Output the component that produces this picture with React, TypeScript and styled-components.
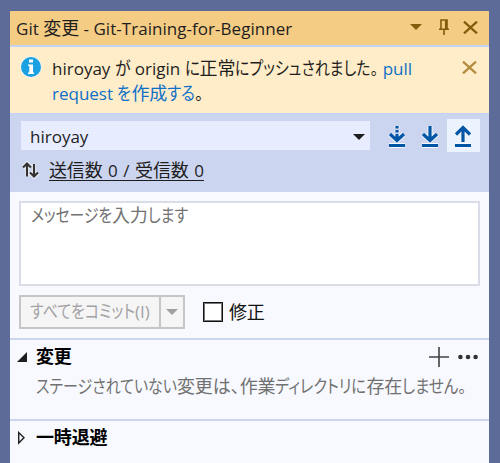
import React from "react";
import styled, { createGlobalStyle } from "styled-components";

const GlobalStyle = createGlobalStyle`
  * { box-sizing: border-box; }
  body { margin: 0; background: #5d6b99; }
`;

const Window = styled.main`
  width: 500px;
  height: 463px;
  padding: 11px 11px 0 10px;
  overflow: hidden;
  background: #5d6b99;
  color: #1e1e1e;
  font: 17px/24px "Open Sans", "Noto Sans CJK JP", sans-serif;
  white-space: pre;
`;

const Panel = styled.div`
  display: flex;
  flex-direction: column;
  height: 452px;
  background: #f7f9fe;
`;

/* Full-width ideographs. */
const Kanji = styled.span<{ $bold?: boolean }>`
  display: inline-block;
  line-height: 0;
  font-family: "Noto Sans CJK JP", sans-serif;
  font-size: 18px;
  font-weight: ${(p) => (p.$bold ? 700 : 400)};
  letter-spacing: -0.15px;
`;

/* Proportional kana, condensed from its natural width to the UI width. */
const Kana = styled.span<{ $natural: number; $width: number }>`
  display: inline-block;
  width: ${(p) => p.$width}px;
  line-height: 0;
  font-family: "Noto Sans CJK JP", sans-serif;
  font-size: 18px;
  font-feature-settings: "palt";
  transform: scaleX(${(p) => p.$width / p.$natural});
  transform-origin: left;
`;

const TitleBar = styled.header`
  display: flex;
  align-items: center;
  height: 34px;
  padding: 0 11px 0 6px;
  background: #f5cc84;
`;

const TitleText = styled.div`
  flex: 1;
  padding-top: 2px;
  letter-spacing: 0.04px;
`;

const TitleButtons = styled.div`
  display: flex;
  align-items: center;
  padding-bottom: 2px;
`;

const TitleIcon = styled.span<{ $gap?: number }>`
  display: flex;
  margin-left: ${(p) => p.$gap ?? 0}px;
`;

const Notice = styled.section`
  display: flex;
  align-items: flex-start;
  height: 68px;
  padding: 9px 12px 0 10px;
  border-top: 2px solid #c3d2f7;
  background: #ffecc8;
`;

const NoticeText = styled.p`
  flex: 1;
  margin: 0 0 0 10px;
  line-height: 25px;
`;

const Link = styled.a`
  color: #0e70c8;
`;

const NoticeClose = styled.div`
  display: flex;
  padding-top: 5px;
`;

const BranchArea = styled.section`
  height: 79px;
  padding: 5px 9px 0 11px;
  border-top: 1px solid #c3d2f7;
  background: #ccd5f0;
`;

const BranchRow = styled.div`
  display: flex;
  align-items: center;
  height: 33px;
`;

const BranchSelect = styled.div`
  display: flex;
  align-items: center;
  justify-content: space-between;
  width: 349px;
  height: 29px;
  margin-right: 11px;
  padding: 2px 5px 0 9px;
  background: #e7edfe;
`;

const ToolButton = styled.button<{ $active?: boolean }>`
  display: grid;
  place-items: center;
  width: 33px;
  height: 33px;
  padding: 0 1px 0 0;
  border: 0;
  background: ${(p) => (p.$active ? "#ebf3fe" : "transparent")};
`;

const SyncRow = styled.div`
  display: flex;
  align-items: center;
  gap: 9px;
  height: 24px;
  margin-top: 6px;
  padding-left: 1px;
`;

const SyncLink = styled.a`
  height: 22px;
  line-height: 23px;
  word-spacing: 1.1px;
  border-bottom: 1px solid #1e1e1e;
`;

const Message = styled.div`
  height: 85px;
  margin: 9px 9px 0;
  padding: 1px 10px;
  border: 2px solid #dadde8;
  background: #fff;
  color: #717171;
`;

const CommitRow = styled.div`
  display: flex;
  align-items: center;
  height: 34px;
  margin: 9px;
`;

const SplitButton = styled.div`
  display: flex;
  width: 166px;
  height: 34px;
  border: 2px solid #c6c6c8;
  background: #f5f5f5;
  color: #a2a2a4;
`;

const SplitLabel = styled.div`
  width: 140px;
  padding: 3px 0 0 9px;
  border-right: 2px solid #c6c6c8;
`;

const SplitArrow = styled.div`
  display: grid;
  flex: 1;
  place-items: center;
`;

const Checkbox = styled.span`
  width: 20px;
  height: 20px;
  margin: 0 6px 0 18px;
  border: 1px solid #111;
  box-shadow: inset 0 0 0 1px #777;
  background: #fff;
`;

const CheckLabel = styled.label`
  padding-top: 1px;
  color: #111;
`;

const Section = styled.section<{ $height: number }>`
  height: ${(p) => p.$height}px;
  padding: 3px 11px 0 7px;
  border-top: 2px solid #cbd5ed;
`;

const SectionHeader = styled.div`
  display: flex;
  align-items: center;
  height: 28px;
  color: #000;
`;

const SectionTitle = styled.h2`
  flex: 1;
  margin: 0 0 0 9px;
  font-size: 17px;
  line-height: 24px;
`;

const SectionActions = styled.div`
  display: flex;
  align-items: center;
  gap: 9px;
`;

const EmptyText = styled.p`
  margin: 4px 0 0 19px;
  color: #717171;
`;

const Caret = ({ color }: { color: string }) => (
  <svg width="12" height="6" viewBox="0 0 12 6">
    <path d="M0 0H12L6 6Z" fill={color} />
  </svg>
);

const Cross = ({ color }: { color: string }) => (
  <svg width="15" height="13" viewBox="0 0 15 13">
    <path d="M1 .6L14 12.4M14 .6L1 12.4" stroke={color} strokeWidth="2.2" />
  </svg>
);

const Pin = () => (
  <svg width="10" height="16" viewBox="0 0 10 16" fill="none">
    <path d="M2 10V1H8V10M0 10.3H10M5 10V16" stroke="#805c0b" strokeWidth="1.6" />
    <path d="M7 1V10" stroke="#805c0b" strokeWidth="2.2" />
  </svg>
);

const Info = () => (
  <svg width="22" height="22" viewBox="0 0 22 22">
    <circle cx="11" cy="11" r="11" fill="#f3f3ed" />
    <circle cx="11" cy="11" r="10" fill="#1ba1e2" />
    <path d="M9 3.5H13V6.5H9ZM8 8.5H13V16.5H14V18H8V16.5H9.3V10H8Z" fill="#fff" />
  </svg>
);

type TransferKind = "fetch" | "pull" | "push";

const arrows: Record<TransferKind, string> = {
  fetch: "M10 2V4.5M10 6V8.5M10 10V16M3 10L10 16.5L17 10",
  pull: "M10 2V16M3 10L10 16.5L17 10",
  push: "M10 18V3M3 10.5L10 3.5L17 10.5",
};

const Transfer = ({ kind }: { kind: TransferKind }) => (
  <svg width="20" height="24" viewBox="0 0 20 24" fill="none">
    <path d={`${arrows[kind]}M2 21.5H18`} stroke="#f5f8fe" strokeWidth="5" />
    <path d={arrows[kind]} stroke="#0055a5" strokeWidth="3.2" />
    <path d="M2 21.5H18" stroke="#0055a5" strokeWidth="3" />
  </svg>
);

const syncPath = "M5 15.5V2.5M1 6.5L5 2.5L9 6.5M12 3V15.5M8 11.5L12 15.5L16 11.5";

const SyncArrows = () => (
  <svg width="18" height="19" viewBox="0 0 18 19" fill="none">
    <path d={syncPath} stroke="#f2f5fc" strokeWidth="4" />
    <path d={syncPath} stroke="#333" strokeWidth="2.2" />
  </svg>
);

const Expanded = () => (
  <svg width="10" height="10" viewBox="0 0 10 10">
    <path d="M10 0V10H0Z" fill="#1e1e1e" />
  </svg>
);

const Collapsed = () => (
  <svg width="10" height="14" viewBox="0 0 10 14">
    <path d="M1.7 1.6V12L7 6.8Z" fill="none" stroke="#1e1e1e" strokeWidth="1.4" />
  </svg>
);

const Plus = () => (
  <svg width="20" height="20" viewBox="0 0 20 20">
    <path d="M10 0V20M0 10H20" stroke="#424242" strokeWidth="1.6" />
  </svg>
);

const More = () => (
  <svg width="20" height="6" viewBox="0 0 20 6" fill="#333">
    <circle cx="2.4" cy="3" r="2.3" />
    <circle cx="10" cy="3" r="2.3" />
    <circle cx="17.6" cy="3" r="2.3" />
  </svg>
);

export default function App() {
  return (
    <>
      <GlobalStyle />
      <Window>
        <Panel>
          <TitleBar>
            <TitleText>
              Git <Kanji>変更</Kanji> - Git-Training-for-Beginner
            </TitleText>
            <TitleButtons>
              <TitleIcon><Caret color="#805c0b" /></TitleIcon>
              <TitleIcon $gap={17}><Pin /></TitleIcon>
              <TitleIcon $gap={14}><Cross color="#805c0b" /></TitleIcon>
            </TitleButtons>
          </TitleBar>

          <Notice>
            <Info />
            <NoticeText>
              hiroyay <Kana $natural={17.6} $width={15.5}>が</Kana> origin{" "}
              <Kana $natural={17.3} $width={15}>に</Kana>
              <Kanji>正常</Kanji>
              <Kana $natural={172} $width={143}>にプッシュされました。</Kana>
              {" "}
              <Link>pull</Link>
              <br />
              <Link>
                request <Kana $natural={16.6} $width={14}>を</Kana>
                <Kanji>作成</Kanji>
                <Kana $natural={32.4} $width={28}>する</Kana>
              </Link>
              <Kana $natural={9} $width={8}>。</Kana>
            </NoticeText>
            <NoticeClose><Cross color="#b28a3c" /></NoticeClose>
          </Notice>

          <BranchArea>
            <BranchRow>
              <BranchSelect>
                hiroyay
                <Caret color="#1e1e1e" />
              </BranchSelect>
              <ToolButton><Transfer kind="fetch" /></ToolButton>
              <ToolButton><Transfer kind="pull" /></ToolButton>
              <ToolButton $active><Transfer kind="push" /></ToolButton>
            </BranchRow>
            <SyncRow>
              <SyncArrows />
              <SyncLink>
                <Kanji>送信数</Kanji> 0 / <Kanji>受信数</Kanji> 0
              </SyncLink>
            </SyncRow>
          </BranchArea>

          <Message>
            <Kana $natural={98.6} $width={81}>メッセージを</Kana>
            <Kanji>入力</Kanji>
            <Kana $natural={48.1} $width={40}>します</Kana>
          </Message>

          <CommitRow>
            <SplitButton>
              <SplitLabel>
                <Kana $natural={125.5} $width={105}>すべてをコミット</Kana>(I)
              </SplitLabel>
              <SplitArrow><Caret color="#a0a0a0" /></SplitArrow>
            </SplitButton>
            <Checkbox />
            <CheckLabel><Kanji>修正</Kanji></CheckLabel>
          </CommitRow>

          <Section $height={81}>
            <SectionHeader>
              <Expanded />
              <SectionTitle><Kanji $bold>変更</Kanji></SectionTitle>
              <SectionActions>
                <Plus />
                <More />
              </SectionActions>
            </SectionHeader>
            <EmptyText>
              <Kana $natural={169.3} $width={141}>ステージされていない</Kana>
              <Kanji>変更</Kanji>
              <Kana $natural={27} $width={27}>は、</Kana>
              <Kanji>作業</Kanji>
              <Kana $natural={107.5} $width={91}>ディレクトリに</Kana>
              <Kanji>存在</Kanji>
              <Kana $natural={74.4} $width={64}>しません。</Kana>
            </EmptyText>
          </Section>

          <Section $height={42}>
            <SectionHeader>
              <Collapsed />
              <SectionTitle><Kanji $bold>一時退避</Kanji></SectionTitle>
            </SectionHeader>
          </Section>
        </Panel>
      </Window>
    </>
  );
}
